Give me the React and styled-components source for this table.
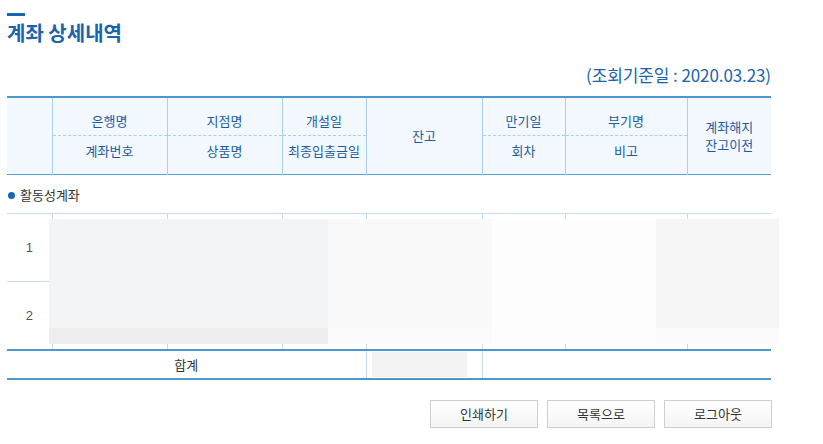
import styled, { createGlobalStyle } from "styled-components";

const GlobalStyle = createGlobalStyle`
body {
  margin: 0;
  background: #fff;
  font-family: "Noto Sans CJK KR", "Noto Sans", sans-serif;
}
`;

const Page = styled.div`
  width: 764px;
  padding: 13px 0 0 7px;
`;

const TitleBar = styled.div`
  width: 18px;
  height: 3px;
  background: #1565b0;
`;

const Title = styled.h1`
  margin: 3px 0 0;
  font-size: 20px;
  font-weight: bold;
  letter-spacing: 0;
  line-height: 28px;
  color: #1a63ad;
`;

const DateLine = styled.div`
  margin-top: 17px;
  text-align: right;
  font-size: 17px;
  line-height: 22px;
  color: #1a63ad;
  letter-spacing: -0.1px;
`;

const TableWrap = styled.div`
  position: relative;
  margin-top: 10px;
`;

const Table = styled.table`
  width: 764px;
  table-layout: fixed;
  border-collapse: collapse;
  font-size: 13px;
`;

const Head = styled.thead`
  background: #f2f8fe;
  border-top: 2px solid #4d97cf;
  border-bottom: 1px solid #5a9fd4;
`;

const Th = styled.th`
  font-weight: normal;
  color: #1c5b9e;
  line-height: 18px;
  border-left: 1px solid #a6cff2;
  padding: ${(p) => (p.$top ? "14px 0 5px" : p.$bottom ? "6px 0 14px" : "0")};
  border-bottom: ${(p) => (p.$top ? "1px dashed #a6cff2" : "none")};
  &:first-child {
    border-left: ${(p) => (p.$first ? "none" : "1px solid #a6cff2")};
  }
`;

const SectionCell = styled.td`
  height: 38px;
  padding: 0 0 0 1px;
  color: #333;
  border-bottom: 1px solid #c2dcee;
`;

const Bullet = styled.span`
  display: inline-block;
  width: 7px;
  height: 7px;
  border-radius: 50%;
  background: #1565b0;
  margin-right: 5px;
  vertical-align: 1px;
`;

const Row = styled.tr`
  height: 68px;
  border-bottom: ${(p) => (p.$last ? "2px solid #4d97cf" : "1px solid #c2dcee")};
`;

const Td = styled.td`
  border-left: 1px solid #c2dcee;
  text-align: center;
  color: #555;
  font-family: "Liberation Sans", "Noto Sans", sans-serif;
  font-size: 13px;
  &:first-child {
    border-left: none;
  }
`;

const TotalRow = styled.tr`
  height: 28px;
  border-bottom: 2px solid #4d97cf;
`;

const TotalCell = styled.td`
  text-align: center;
  color: #333;
  border-left: ${(p) => (p.$divider ? "1px solid #c2dcee" : "none")};
  padding: ${(p) => (p.$boxed ? "1px 15px 1px 5px" : "0")};
`;

const GrayBox = styled.div`
  height: 25px;
  background: #f3f3f3;
`;

const Mask = styled.div`
  position: absolute;
  top: 123px;
  height: 125px;
  background: linear-gradient(
    to bottom,
    ${(p) => p.$top} 0,
    ${(p) => p.$top} 109px,
    ${(p) => p.$bottom} 109px
  );
`;

const Buttons = styled.div`
  display: flex;
  justify-content: flex-end;
  gap: 9px;
  margin-top: 20px;
  margin-right: -1px;
`;

const Button = styled.button`
  width: 108px;
  height: 28px;
  border: 1px solid #cfcfcf;
  background: linear-gradient(to bottom, #ffffff, #f4f4f4);
  font-family: "Noto Sans CJK KR", sans-serif;
  font-size: 13px;
  color: #333;
  padding: 0;
  cursor: pointer;
`;

const widths = [45, 115, 115, 84, 116, 83, 122, 84];

const masks = [
  { left: 42, width: 279, top: "#f3f4f6", bottom: "#eeeeee" },
  { left: 321, width: 164, top: "#f9f9f9", bottom: "#fafafa" },
  { left: 485, width: 164, top: "#fdfdfd", bottom: "#fdfdfd" },
  { left: 649, width: 123, top: "#f5f5f5", bottom: "#fafafa" },
];

export default function App() {
  return (
    <Page>
      <GlobalStyle />
      <TitleBar />
      <Title>계좌 상세내역</Title>
      <DateLine>(조회기준일 : 2020.03.23)</DateLine>
      <TableWrap>
        <Table>
          <colgroup>
            {widths.map((w, i) => (
              <col key={i} style={{ width: w }} />
            ))}
          </colgroup>
          <Head>
            <tr>
              <Th rowSpan={2} $first />
              <Th $top>은행명</Th>
              <Th $top>지점명</Th>
              <Th $top>개설일</Th>
              <Th rowSpan={2}>잔고</Th>
              <Th $top>만기일</Th>
              <Th $top>부기명</Th>
              <Th rowSpan={2}>
                계좌해지
                <br />
                잔고이전
              </Th>
            </tr>
            <tr>
              <Th $bottom>계좌번호</Th>
              <Th $bottom>상품명</Th>
              <Th $bottom>최종입출금일</Th>
              <Th $bottom>회차</Th>
              <Th $bottom>비고</Th>
            </tr>
          </Head>
          <tbody>
            <tr>
              <SectionCell colSpan={8}>
                <Bullet />
                활동성계좌
              </SectionCell>
            </tr>
            {[1, 2].map((n) => (
              <Row key={n} $last={n === 2}>
                <Td>{n}</Td>
                {widths.slice(1).map((_, i) => (
                  <Td key={i} />
                ))}
              </Row>
            ))}
            <TotalRow>
              <TotalCell colSpan={4}>합계</TotalCell>
              <TotalCell $divider $boxed>
                <GrayBox />
              </TotalCell>
              <TotalCell $divider colSpan={3} />
            </TotalRow>
          </tbody>
        </Table>
        {masks.map((m, i) => (
          <Mask
            key={i}
            $top={m.top}
            $bottom={m.bottom}
            style={{ left: m.left, width: m.width }}
          />
        ))}
      </TableWrap>
      <Buttons>
        <Button>인쇄하기</Button>
        <Button>목록으로</Button>
        <Button>로그아웃</Button>
      </Buttons>
    </Page>
  );
}
